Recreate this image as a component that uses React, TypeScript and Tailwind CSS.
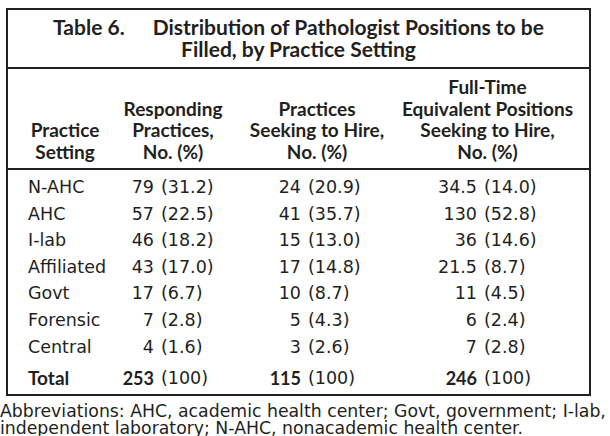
import React from "react";

type Row = { label: string; c2: [string, string]; c3: [string, string]; c4: [string, string] };

const rows: Row[] = [
  { label: "N-AHC", c2: ["79", "(31.2)"], c3: ["24", "(20.9)"], c4: ["34.5", "(14.0)"] },
  { label: "AHC", c2: ["57", "(22.5)"], c3: ["41", "(35.7)"], c4: ["130", "(52.8)"] },
  { label: "I-lab", c2: ["46", "(18.2)"], c3: ["15", "(13.0)"], c4: ["36", "(14.6)"] },
  { label: "Affiliated", c2: ["43", "(17.0)"], c3: ["17", "(14.8)"], c4: ["21.5", "(8.7)"] },
  { label: "Govt", c2: ["17", "(6.7)"], c3: ["10", "(8.7)"], c4: ["11", "(4.5)"] },
  { label: "Forensic", c2: ["7", "(2.8)"], c3: ["5", "(4.3)"], c4: ["6", "(2.4)"] },
  { label: "Central", c2: ["4", "(1.6)"], c3: ["3", "(2.6)"], c4: ["7", "(2.8)"] },
];

function Cell({ v, w, bold }: { v: [string, string]; w: string; bold?: boolean }) {
  return (
    <div className="flex whitespace-nowrap">
      <span
        className={
          w +
          " text-right " +
          (bold ? "font-['Lato',sans-serif] font-bold text-[18px]" : "")
        }
      >
        {v[0]}
      </span>
      <span className="ml-[7px]">{v[1]}</span>
    </div>
  );
}

export default function App() {
  return (
    <div className="min-h-screen bg-white pt-[8px] text-[#231f20] font-['DejaVu_Sans',sans-serif]">
      <div className="ml-[6px] w-[585px] border-2 border-[#231f20]">
        <div className="pt-[6px] pb-[7px] text-center font-['Lato',sans-serif] font-bold text-[21px] leading-[22px]">
          <div className="whitespace-nowrap">
            Table 6.<span className="inline-block w-[28px]" />Distribution of Pathologist Positions to be
          </div>
          <div>Filled, by Practice Setting</div>
        </div>
        <div className="border-t-2 border-[#231f20] grid grid-cols-[114px_102px_162px_203px] items-end pt-[7px] pb-[6px] font-['Lato',sans-serif] font-bold text-[19px] leading-[21.5px] text-center">
          <div>
            Practice
            <br />
            Setting
          </div>
          <div className="whitespace-nowrap">
            Responding
            <br />
            Practices,
            <br />
            No. (%)
          </div>
          <div className="whitespace-nowrap pl-[24px]">
            Practices
            <br />
            Seeking to Hire,
            <br />
            No. (%)
          </div>
          <div className="whitespace-nowrap">
            Full-Time
            <br />
            Equivalent Positions
            <br />
            Seeking to Hire,
            <br />
            No. (%)
          </div>
        </div>
        <div className="border-t-2 border-[#231f20] pt-[4px] pb-[2px] text-[17.5px] leading-[26.6px]">
          {rows.map((r) => (
            <div key={r.label} className="grid grid-cols-[114px_102px_162px_203px]">
              <div className="pl-[20px]">{r.label}</div>
              <Cell v={r.c2} w="w-[32px]" />
              <Cell v={r.c3} w="w-[77px]" />
              <Cell v={r.c4} w="w-[91px]" />
            </div>
          ))}
          <div className="grid grid-cols-[114px_102px_162px_203px] mt-[5px]">
            <div className="pl-[20px] font-['Lato',sans-serif] font-bold text-[19px]">Total</div>
            <Cell v={["253", "(100)"]} w="w-[32px]" bold />
            <Cell v={["115", "(100)"]} w="w-[77px]" bold />
            <Cell v={["246", "(100)"]} w="w-[91px]" bold />
          </div>
        </div>
      </div>
      <p className="mt-[7px] text-[17.3px] leading-[17px] whitespace-nowrap">
        Abbreviations: AHC, academic health center; Govt, government; I-lab,
        <br />
        independent laboratory; N-AHC, nonacademic health center.
      </p>
    </div>
  );
}
